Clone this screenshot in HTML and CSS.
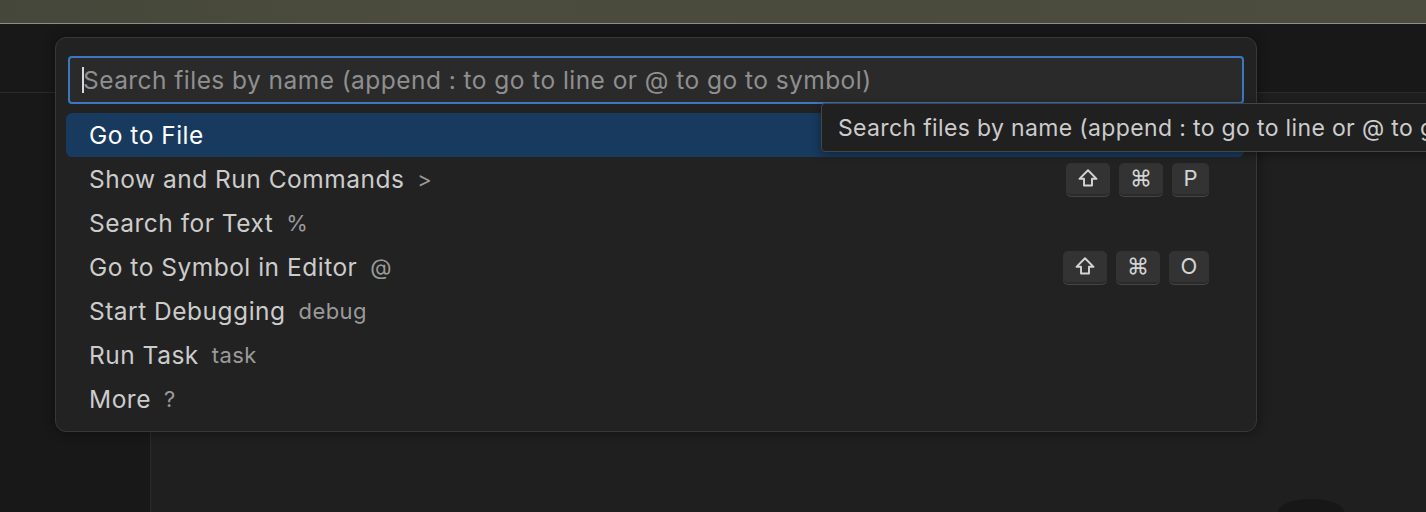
FILE: index.html
```html
<!DOCTYPE html>
<html lang="en">
<head>
<meta charset="utf-8">
<title>Quick Open</title>
<link rel="stylesheet" href="styles.css">
</head>
<body>
<div class="wallpaper"></div>
<div class="window">
  <div class="titlebar"></div>
  <div class="main">
    <div class="sidebar"></div>
    <div class="editor"></div>
  </div>
</div>
<div class="avatar"></div>

<div class="quickpick">
  <div class="input">
    <span class="caret"></span>
    <span class="placeholder">Search files by name (append : to go to line or @ to go to symbol)</span>
  </div>
  <ul class="list">
    <li class="row selected"><span class="label">Go to File</span></li>
    <li class="row"><span class="label">Show and Run Commands</span><span class="desc">&gt;</span>
      <span class="keys"><span class="key wide"><svg viewBox="0 0 16 16" width="22" height="22"><path d="M8 2.4 L14.2 8.6 H10.9 V13.4 H5.1 V8.6 H1.8 Z" fill="none" stroke="#d4d4d4" stroke-width="1.4" stroke-linejoin="round"/></svg></span><span class="key wide">⌘</span><span class="key">P</span></span>
    </li>
    <li class="row"><span class="label">Search for Text</span><span class="desc">%</span></li>
    <li class="row"><span class="label">Go to Symbol in Editor</span><span class="desc">@</span>
      <span class="keys"><span class="key wide"><svg viewBox="0 0 16 16" width="22" height="22"><path d="M8 2.4 L14.2 8.6 H10.9 V13.4 H5.1 V8.6 H1.8 Z" fill="none" stroke="#d4d4d4" stroke-width="1.4" stroke-linejoin="round"/></svg></span><span class="key wide">⌘</span><span class="key o">O</span></span>
    </li>
    <li class="row"><span class="label">Start Debugging</span><span class="desc">debug</span></li>
    <li class="row"><span class="label">Run Task</span><span class="desc">task</span></li>
    <li class="row"><span class="label">More</span><span class="desc">?</span></li>
  </ul>
</div>

<div class="tooltip">Search files by name (append : to go to line or @ to go to symbol)</div>
</body>
</html>
```

FILE: styles.css
```css
* { box-sizing: border-box; }
html, body {
  margin: 0;
  padding: 0;
  width: 1426px;
  height: 512px;
  overflow: hidden;
  background: #1f1f1f;
  font-family: Inter, "Noto Sans", "Liberation Sans", sans-serif;
}
.wallpaper {
  height: 24px;
  background: linear-gradient(90deg, #45473a 0%, #4b4c3d 30%, #4a4b3c 60%, #4c4d3e 100%);
  border-bottom: 1px solid #8e8f86;
}
.window {
  display: flex;
  flex-direction: column;
  height: 488px;
}
.titlebar {
  height: 69px;
  background: #181818;
  border-bottom: 1px solid #2b2b2b;
  flex: none;
}
.main {
  flex: 1;
  display: flex;
}
.sidebar {
  width: 151px;
  background: #181818;
  border-right: 1px solid #2b2b2b;
}
.editor {
  flex: 1;
  background: #1f1f1f;
}
.avatar {
  position: absolute;
  left: 1278px;
  top: 499px;
  width: 66px;
  height: 13px;
  border-radius: 33px 33px 0 0 / 13px 13px 0 0;
  background: #171717;
}
.quickpick {
  position: absolute;
  left: 55px;
  top: 37px;
  width: 1202px;
  height: 395px;
  background: #222222;
  border: 1px solid #383838;
  border-radius: 11px;
  box-shadow: 0 0 12px rgba(0,0,0,0.45);
  padding: 18px 12px 0 10px;
}
.input {
  margin: 0 0 0 2px;
  height: 48px;
  border: 2px solid #3a78c4;
  border-radius: 4px;
  background: #2a2a2a;
  display: flex;
  align-items: center;
  padding-left: 12px;
}
.caret {
  width: 2px;
  height: 26px;
  background: #d8d8d8;
  margin-right: -1px;
}
.placeholder {
  color: #8f8f8f;
  font-size: 24.5px;
  letter-spacing: 0.45px;
  white-space: nowrap;
}
.list {
  list-style: none;
  margin: 9px 0 0 0;
  padding: 0;
}
.row {
  height: 44px;
  display: flex;
  align-items: center;
  padding-left: 23px;
  padding-right: 35px;
  border-radius: 6px;
  color: #cccccc;
}
.row.selected {
  background: #173a5e;
  color: #ffffff;
}
.label {
  font-size: 24.5px;
  letter-spacing: 0.5px;
  white-space: nowrap;
}
.desc {
  font-size: 22px;
  letter-spacing: 0.4px;
  color: #9a9a9a;
  margin-left: 13px;
  white-space: nowrap;
}
.keys {
  margin-left: auto;
  display: flex;
  gap: 9px;
}
.key {
  min-width: 37px;
  height: 33px;
  padding: 0 8px;
  display: flex;
  align-items: center;
  justify-content: center;
  background: #333333;
  border-radius: 5px;
  border-bottom: 2px solid #2a2a2a;
  box-shadow: 0 1px 0 #444444;
  color: #d4d4d4;
  font-size: 22px;
}
.key.wide {
  min-width: 44px;
}
.key.o {
  min-width: 40px;
}
.tooltip {
  position: absolute;
  left: 821px;
  top: 103px;
  width: 640px;
  height: 49px;
  background: #202020;
  border: 1px solid #454545;
  border-radius: 4px;
  color: #cccccc;
  font-size: 23px;
  letter-spacing: 0.35px;
  display: flex;
  align-items: center;
  padding-left: 16px;
  white-space: nowrap;
  overflow: hidden;
  box-shadow: 0 2px 8px rgba(0,0,0,0.4);
}
```
